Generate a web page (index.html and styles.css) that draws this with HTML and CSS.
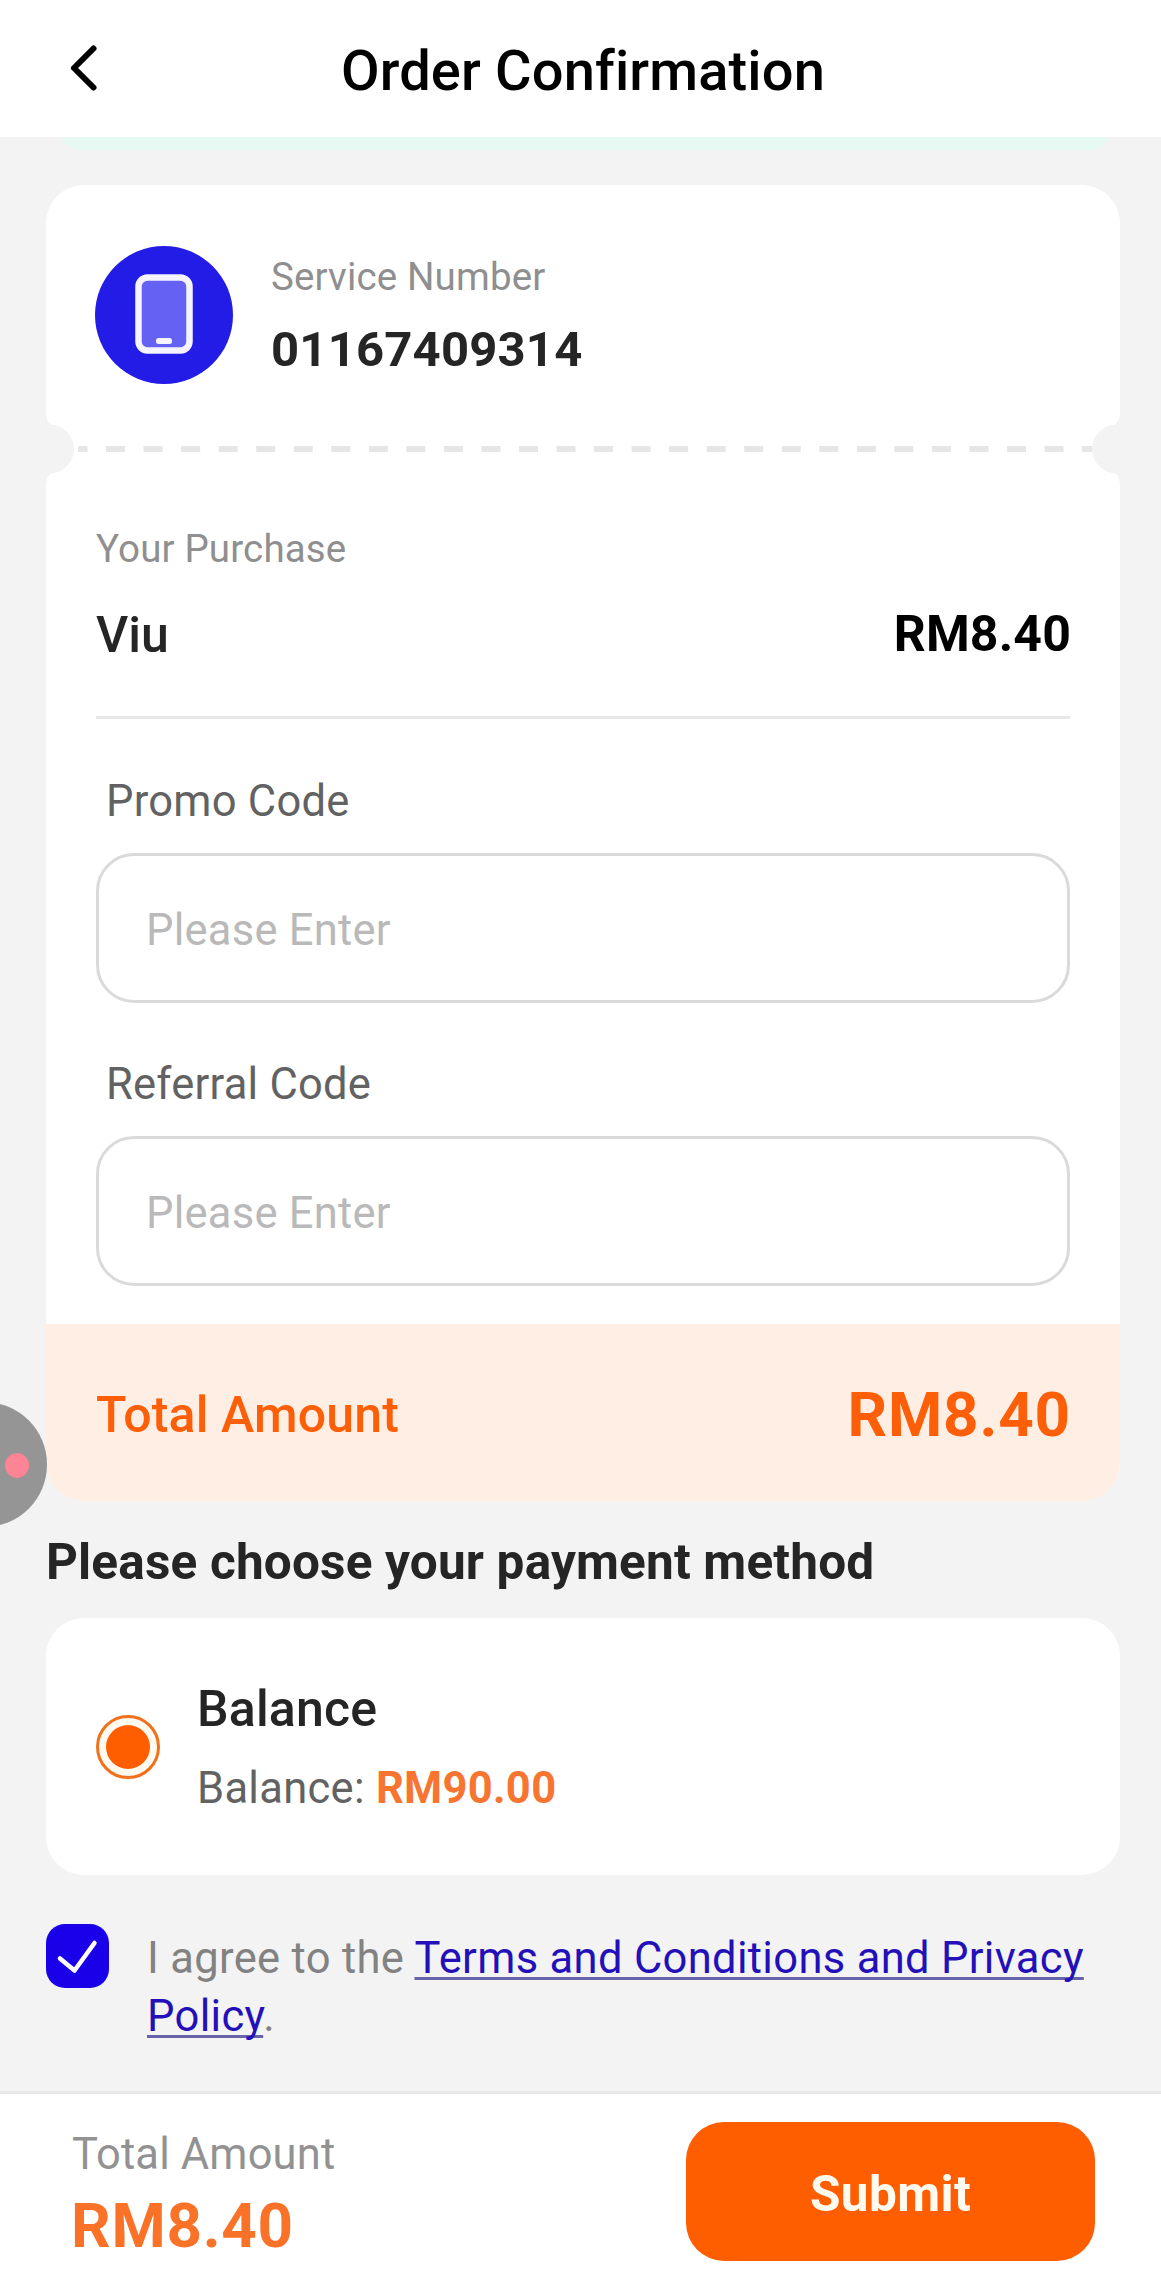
FILE: index.html
```html
<!DOCTYPE html>
<html lang="en">
<head>
<meta charset="utf-8">
<title>Order Confirmation</title>
<link rel="stylesheet" href="styles.css">
</head>
<body>
<div class="screen">
  <header class="topbar">
    <svg class="back" width="32" height="52" viewBox="0 0 32 52" fill="none" stroke="#000" stroke-width="6" stroke-linecap="round" stroke-linejoin="round"><path d="M24.5 6.5 5 26l19.5 19.5"/></svg>
    <h1 class="title">Order Confirmation</h1>
  </header>

  <main class="content">
    <div class="notice"></div>

    <section class="ticket">
      <div class="service">
        <svg class="service-icon" width="138" height="138" viewBox="0 0 138 138">
          <circle cx="69" cy="69" r="69" fill="#231be6"/>
          <rect x="43.5" y="31.5" width="51" height="73" rx="9" fill="#6461f3" stroke="#f5f3ff" stroke-width="6.5"/>
          <rect x="61" y="92" width="16" height="6" rx="2.5" fill="#f5f3ff"/>
        </svg>
        <div>
          <p class="caption">Service Number</p>
          <p class="number">01167409314</p>
        </div>
      </div>

      <svg class="tear" width="1074" height="70" viewBox="0 0 1074 70">
        <path d="M0 0Q1 8 5 10.4A25 25 0 0 1 28 35A25 25 0 0 1 5 59.6Q1 62 0 70Z" fill="#f3f3f3"/>
        <path d="M1074 0Q1073 8 1069 10.4A25 25 0 0 0 1046 35A25 25 0 0 0 1069 59.6Q1073 62 1074 70Z" fill="#f3f3f3"/>
        <path d="M32 35H1046" stroke="#e6e6e6" stroke-width="6" stroke-dasharray="19 18.54" stroke-dashoffset="9.5"/>
      </svg>

      <div class="details">
        <p class="caption">Your Purchase</p>
        <div class="item">
          <span class="item-name">Viu</span>
          <span class="item-price">RM8.40</span>
        </div>
        <div class="rule"></div>
        <div class="field">
          <label class="label">Promo Code</label>
          <div class="input">Please Enter</div>
        </div>
        <div class="field">
          <label class="label">Referral Code</label>
          <div class="input">Please Enter</div>
        </div>
      </div>

      <div class="total">
        <span class="total-label">Total Amount</span>
        <span class="total-price">RM8.40</span>
      </div>
    </section>

    <h2 class="heading">Please choose your payment method</h2>

    <section class="method">
      <svg width="64" height="64" viewBox="0 0 64 64">
        <circle cx="32" cy="32" r="30.5" fill="#fffaf0" stroke="#f0701c" stroke-width="3"/>
        <circle cx="32" cy="32" r="22" fill="#ff5e00"/>
      </svg>
      <div class="method-text">
        <p class="method-name">Balance</p>
        <p class="method-balance">Balance: <b>RM90.00</b></p>
      </div>
    </section>

    <div class="agree">
      <svg class="check" width="63" height="64" viewBox="0 0 63 64">
        <rect width="63" height="64" rx="19" fill="#1a00e8"/>
        <path d="M14 34.5 28.5 46.5 48.5 19" fill="none" stroke="#fff" stroke-width="4.5" stroke-linecap="round" stroke-linejoin="round"/>
      </svg>
      <p class="agree-text">I agree to the <a class="link">Terms and Conditions and Privacy Policy</a>.</p>
    </div>
  </main>

  <footer class="footer">
    <div class="sum">
      <p class="sum-label">Total Amount</p>
      <p class="sum-price">RM8.40</p>
    </div>
    <button class="submit">Submit</button>
  </footer>

  <div class="bubble"><span class="bubble-dot"></span></div>
</div>
</body>
</html>
```
FILE: styles.css
```css
* { box-sizing: border-box; margin: 0; padding: 0; }

body {
  background: #f3f3f3;
  font-family: Roboto, "Liberation Sans", sans-serif;
  color: #252525;
}

.screen {
  position: relative;
  display: flex;
  flex-direction: column;
  width: 1161px;
  height: 2289px;
  overflow: hidden;
}

svg { display: block; flex: none; }

/* Top bar */
.topbar {
  display: grid;
  grid-template-columns: 341px 1fr;
  align-items: start;
  height: 137px;
  background: #fff;
}
.back { margin: 42px 0 0 69px; }
.title {
  padding-top: 5px;
  font-size: 56px;
  font-weight: 500;
  line-height: 132px;
  letter-spacing: 0.15px;
  color: #000;
}

.content { flex: 1; padding: 0 41px 0 46px; }

.notice {
  height: 13px;
  margin: 0 12px 35px 16px;
  border-radius: 0 0 20px 20px / 0 0 13px 13px;
  background: #e7f9f3;
}

/* Ticket */
.ticket {
  overflow: hidden;
  border-radius: 38px;
  background: #fff;
}
.service {
  display: flex;
  gap: 37px;
  height: 229px;
  padding: 61px 0 0 49px;
}
.service > div { padding-left: 1px; }
.service .caption { margin-top: 8px; }
.caption {
  font-size: 38.5px;
  line-height: 46px;
  letter-spacing: 0.15px;
  color: #8f8f8f;
}
.number {
  margin-top: 21px;
  font-size: 49px;
  font-weight: 700;
  line-height: 58px;
  letter-spacing: 0.2px;
}

.details { padding: 42px 50px 38px; }
.item {
  display: flex;
  justify-content: space-between;
  align-items: flex-start;
  margin-top: 33px;
  font-size: 50px;
}
.item-name { font-weight: 500; line-height: 60px; }
.item-price {
  margin-right: -1px;
  font-weight: 700;
  line-height: 58px;
  letter-spacing: 0.15px;
  color: #000;
}
.rule { height: 3px; margin-top: 51px; background: #e8e8e8; }
.field { margin-top: 55px; }
.rule + .field { margin-top: 56px; }
.label {
  display: block;
  padding: 1px 0 0 10px;
  font-size: 43.5px;
  line-height: 52px;
  letter-spacing: 0.25px;
  color: #626262;
}
.input {
  height: 150px;
  margin-top: 25px;
  padding: 3px 0 0 47px;
  border: 3px solid #dadada;
  border-radius: 38px;
  font-size: 43.5px;
  line-height: 144px;
  letter-spacing: 0.25px;
  color: #b9b9b9;
}

.total {
  display: flex;
  justify-content: space-between;
  align-items: center;
  height: 177px;
  padding: 4px 49px 0 50px;
  background: #ffeee4;
  color: #fc5f08;
}
.total-label { font-size: 50px; font-weight: 500; letter-spacing: 0.15px; }
.total-price { font-size: 62px; font-weight: 700; letter-spacing: 0.8px; }

/* Payment method */
.heading {
  margin: 31px 0 26px;
  font-size: 49.5px;
  font-weight: 700;
  line-height: 60px;
  letter-spacing: 0.18px;
}
.method {
  display: flex;
  align-items: center;
  gap: 37px;
  height: 257px;
  padding-left: 50px;
  border-radius: 38px;
  background: #fff;
}
.method-text { display: grid; gap: 24px; }
.method-name {
  font-size: 50px;
  font-weight: 500;
  line-height: 60px;
  letter-spacing: 0.2px;
}
.method-balance {
  font-size: 43.5px;
  line-height: 52px;
  letter-spacing: 0.3px;
  color: #626262;
}
.method-balance b { font-weight: 700; color: #f77530; }

/* Agreement */
.agree { display: flex; align-items: flex-start; gap: 38px; margin-top: 49px; }
.agree-text {
  margin-top: 6px;
  font-size: 43.5px;
  line-height: 58px;
  letter-spacing: 0.33px;
  color: #828282;
}
.link {
  color: #2310b8;
  text-decoration: underline 3px #6763a8;
  text-underline-offset: 4px;
  text-decoration-skip-ink: none;
}

/* Footer */
.footer {
  display: flex;
  justify-content: space-between;
  align-items: flex-start;
  height: 198px;
  padding: 28px 66px 0 72px;
  border-top: 3px solid #e8e8e8;
  background: #fff;
}
.sum { padding-top: 7px; }
.sum-label {
  font-size: 43.5px;
  line-height: 52px;
  letter-spacing: 0.15px;
  color: #929292;
}
.sum-price {
  margin: 9px 0 0 -1px;
  font-size: 62px;
  font-weight: 700;
  line-height: 72px;
  letter-spacing: 0.7px;
  color: #fa7228;
}
.submit {
  width: 409px;
  height: 139px;
  padding-top: 4px;
  border: 0;
  border-radius: 38px;
  background: #ff5e00;
  font: 700 49.5px Roboto, "Liberation Sans", sans-serif;
  letter-spacing: 0.4px;
  color: #fffaf0;
}

/* Screen recorder bubble floating over the left edge */
.bubble {
  position: absolute;
  top: 1402px;
  left: -78px;
  width: 125px;
  height: 125px;
  border-radius: 50%;
  background: #959595;
}
.bubble-dot {
  position: absolute;
  top: 51px;
  left: 83px;
  width: 24px;
  height: 25px;
  border-radius: 50%;
  background: #fb8495;
}
```
